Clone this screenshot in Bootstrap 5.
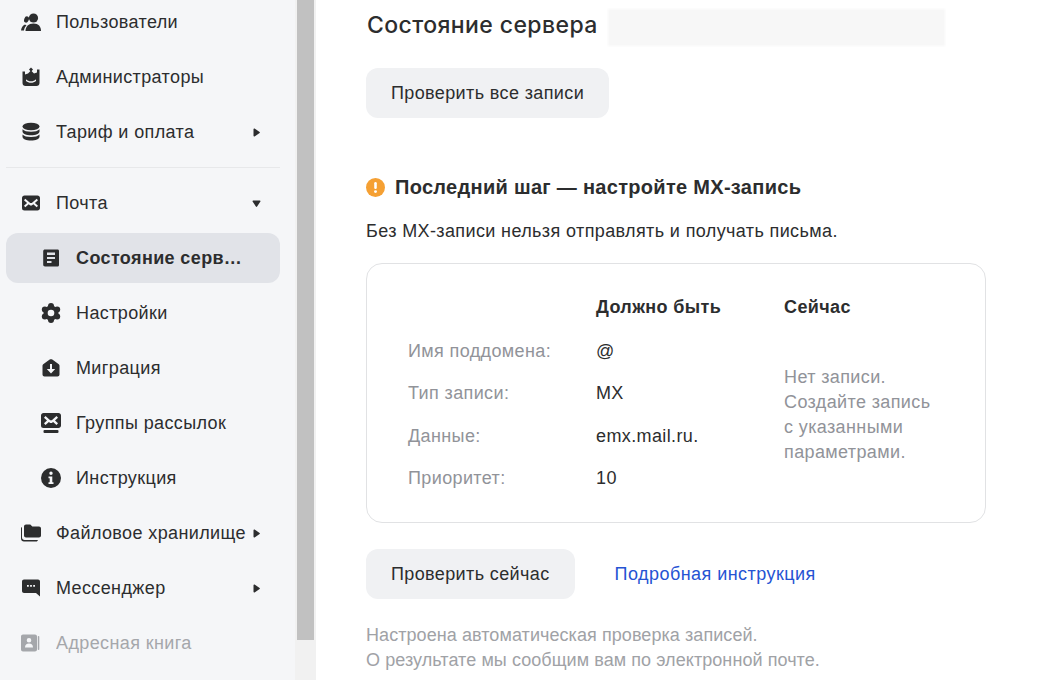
<!DOCTYPE html>
<html lang="ru">
<head>
  <meta charset="UTF-8"/>
  <meta name="viewport" content="width=device-width, initial-scale=1.0"/>
  <title>Состояние сервера</title>
  <link rel="stylesheet" href="https://cdn.jsdelivr.net/npm/bootstrap@5.3.0/dist/css/bootstrap.min.css"/>
  <style>
    html, body { height: 680px; overflow: hidden; }
    body { font-family: "Liberation Sans", Arial, sans-serif; font-size: 18px; line-height: 25px; letter-spacing: .38px; color: #2c2d2e; background: #fff; }
    .page-wrap { height: 680px; }
    .side-menu { width: 295px; height: 680px; background: #f5f6f8; padding: 0 15px 0 6px; margin: 0; flex: none; }
    .side-list { margin-top: -3px; gap: 5px; }
    .side-item { height: 50px; padding: 0 19px 0 15px; border-radius: 12px; color: #2c2d2e; text-decoration: none; white-space: nowrap; }
    .side-item.sub { padding-left: 35px; padding-right: 33px; }
    .side-item.active-item { background: #e1e3e8; font-weight: 700; }
    .side-item.off { color: #a5a7ab; }
    .side-icon { width: 20px; height: 20px; flex: none; margin-right: 15px; fill: currentColor; }
    .side-label { flex: 1 1 auto; min-width: 0; overflow: hidden; text-overflow: ellipsis; }
    .side-arrow { width: 9px; height: 9px; flex: none; margin-left: 5px; fill: currentColor; }
    .side-line { height: 1px; background: #e7e8ea; margin: 5px 0; }
    .scroll-track { width: 21px; height: 680px; flex: none; background: #f1f1f1; padding: 0 2px; }
    .scroll-thumb { height: 640px; background: #c1c1c1; }
    .main-area { padding: 0 0 0 50px; width: 670px; }
    .title-row { height: 68px; }
    .page-title { font-family: Inter, "Liberation Sans", sans-serif; font-size: 23px; line-height: 30px; font-weight: 500; letter-spacing: .4px; margin: 10px 0 0 1px; }
    .blur-patch { width: 337px; height: 37px; margin: 9px 0 0 10px; background: #f7f7f7; filter: blur(1px); }
    .grey-btn { background: #f0f1f3; color: #2c2d2e; border: 0; border-radius: 12px; height: 50px; padding: 0 25px; font-size: 18px; line-height: 25px; letter-spacing: .38px; }
    .warn-row { margin-top: 57px; }
    .warn-title { font-size: 20px; line-height: 25px; font-weight: 700; letter-spacing: .3px; margin: 0; }
    .warn-icon { width: 19px; height: 19px; margin-right: 10px; flex: none; }
    .mx-text { margin-top: 19px; }
    .record-box { width: 620px; height: 260px; border: 1px solid #e1e2e4; border-radius: 16px; padding: 31px 0 0 41px; margin-top: 19px; }
    .col-names { width: 188px; color: #919399; }
    .col-want { width: 188px; }
    .col-now { width: 170px; color: #919399; }
    .record-head { font-weight: 700; height: 25px; margin-bottom: 19px; }
    .col-now .record-head { color: #2c2d2e; }
    .record-row { height: 25px; margin-bottom: 17.3px; }
    .now-text { margin-top: 45px; }
    .check-row { margin-top: 26px; }
    .more-link { color: #2553d3; text-decoration: none; margin-left: 40px; letter-spacing: .45px; }
    .foot-note { color: #a0a2a6; margin: 24px 0 0; letter-spacing: .07px; }
  </style>
</head>
<body>
  <div class="page-wrap d-flex">
    <!-- sidebar -->
    <nav class="side-menu">
      <div class="side-list d-flex flex-column">
        <a class="side-item d-flex align-items-center" href="#">
          <svg class="side-icon" viewBox="0 0 20 20"><circle cx="12.500" cy="6" r="4.600"/><path d="M4.500 19c0-4.500 3-7.500 8-7.500s7.500 3 7.500 7.500z"/><ellipse cx="5.500" cy="7.500" rx="2.300" ry="3.300" transform="rotate(20 5.500 7.500)"/><path d="M0 18.500c.2-2.500 1.500-5 4-6l1.500 1c-1.500 1.200-2.300 3-2.500 5z"/></svg>
          <span class="side-label">Пользователи</span>
        </a>
        <a class="side-item d-flex align-items-center" href="#">
          <svg class="side-icon" viewBox="0 0 20 20"><path d="M10 .5l2 2.100-2 2.100-2-2.100z"/><path fill-rule="evenodd" d="M1.500 4.500H4v3l3-1 3-3 3 3 3-1v-3h2.500V16c0 1.700-1.300 3-3 3h-11c-1.700 0-3-1.300-3-3zM5 12.300c1.500 1.400 3 2 5 2s3.500-.6 5-2V14c-1.500 1.200-3 1.800-5 1.800S6.500 15.200 5 14z"/></svg>
          <span class="side-label">Администраторы</span>
        </a>
        <a class="side-item d-flex align-items-center" href="#">
          <svg class="side-icon" viewBox="0 0 20 20"><ellipse cx="10" cy="4.500" rx="8.500" ry="3.800"/><path d="M1.500 7.300C3 9 6 9.800 10 9.800s7-.8 8.500-2.500v2.200c0 2.200-3.800 3.800-8.500 3.800s-8.500-1.600-8.500-3.800z"/><path d="M1.500 12.600c1.500 1.700 4.500 2.500 8.500 2.500s7-.8 8.500-2.500v2.200c0 2.200-3.800 3.800-8.500 3.800s-8.500-1.600-8.500-3.800z"/></svg>
          <span class="side-label">Тариф и оплата</span>
          <svg class="side-arrow" viewBox="0 0 9 9"><path d="M1.500 1.200c0-.6.600-.9 1.100-.6l5 3.300c.4.300.4.900 0 1.200l-5 3.300c-.5.300-1.100 0-1.100-.6z"/></svg>
        </a>
        <div class="side-line"></div>
        <a class="side-item d-flex align-items-center" href="#">
          <svg class="side-icon" viewBox="0 0 20 20"><path fill-rule="evenodd" d="M3.500 2.500h13c1.400 0 2.500 1.100 2.500 2.500v10c0 1.400-1.100 2.500-2.500 2.500h-13A2.500 2.500 0 0 1 1 15V5c0-1.400 1.100-2.500 2.500-2.500zM4.300 5.800L3 7.300 6.100 10 3 12.700l1.300 1.500L7.700 11.200 9.200 12.500h1.600l1.500-1.300 3.400 3 1.300-1.500L13.900 10 17 7.300l-1.300-1.500L10.800 10H9.200z"/></svg>
          <span class="side-label">Почта</span>
          <svg class="side-arrow" viewBox="0 0 9 9"><path d="M1.200 1.500h6.600c.6 0 .9.600.6 1.100l-3.300 5c-.3.400-.9.400-1.200 0l-3.300-5c-.3-.5 0-1.100.6-1.100z"/></svg>
        </a>
        <a class="side-item sub active-item d-flex align-items-center" href="#">
          <svg class="side-icon" viewBox="0 0 20 20"><path fill-rule="evenodd" d="M4 1.500h12.500c1 0 1.500.6 1.500 1.500v14c0 .9-.5 1.500-1.500 1.500H4c-1 0-1.800-.7-1.800-1.700V3.200c0-1 .8-1.700 1.800-1.700zM6 4.500V7h8V4.500zM6 9v2h8V9zM6 13v2h4.500v-2z"/></svg>
          <span class="side-label">Состояние сервера</span>
        </a>
        <a class="side-item sub d-flex align-items-center" href="#">
          <svg class="side-icon" viewBox="0 0 20 20"><circle cx="10" cy="3" r="3"/><circle cx="16.200" cy="6.500" r="3"/><circle cx="16.200" cy="13.500" r="3"/><circle cx="10" cy="17" r="3"/><circle cx="3.800" cy="13.500" r="3"/><circle cx="3.800" cy="6.500" r="3"/><circle cx="10" cy="10" r="7.500"/><circle cx="10" cy="10" r="3.300" fill="#f5f6f8"/></svg>
          <span class="side-label">Настройки</span>
        </a>
        <a class="side-item sub d-flex align-items-center" href="#">
          <svg class="side-icon" viewBox="0 0 20 20"><path fill-rule="evenodd" d="M8.700 1.500c.8-.5 1.800-.5 2.600 0l6.500 4.700c.5.400.7.900.7 1.500v8.800c0 1.100-.9 2-2 2h-13c-1.100 0-2-.9-2-2V7.700c0-.6.200-1.100.7-1.500zM9 6v5H5.800l4.200 4.600 4.200-4.600H11V6z"/></svg>
          <span class="side-label">Миграция</span>
        </a>
        <a class="side-item sub d-flex align-items-center" href="#">
          <svg class="side-icon" viewBox="0 0 20 20"><path fill-rule="evenodd" d="M2.500 0h15C18.900 0 20 1.100 20 2.500v10c0 1.400-1.100 2.500-2.500 2.500h-15A2.500 2.500 0 0 1 0 12.500v-10C0 1.100 1.100 0 2.500 0zM4.500 3L3 4.700 6 7.500 3 10.300 4.500 12l3.400-3 1.300 1.100h1.600l1.300-1.100 3.400 3 1.500-1.700-3-2.800 3-2.800L15.500 3l-4.700 4.300H9.200z"/><rect x="2.500" y="17" width="15" height="3" rx="1"/></svg>
          <span class="side-label">Группы рассылок</span>
        </a>
        <a class="side-item sub d-flex align-items-center" href="#">
          <svg class="side-icon" viewBox="0 0 20 20"><path fill-rule="evenodd" d="M10 0a10 10 0 1 1 0 20 10 10 0 0 1 0-20zM10 3.500a1.700 1.700 0 1 0 0 3.400 1.700 1.700 0 0 0 0-3.400zM7.500 8.500v1.700h1.200v4H7.500V16h5v-1.800h-1.200V8.500z"/></svg>
          <span class="side-label">Инструкция</span>
        </a>
        <a class="side-item d-flex align-items-center" href="#">
          <svg class="side-icon" viewBox="0 0 20 20"><path d="M5 1.500h4.300l2 2H18c1.100 0 2 .9 2 2v7c0 1.100-.9 2-2 2H5c-1.100 0-2-.9-2-2v-9c0-1.100.9-2 2-2z"/><path d="M0 5.500c0-.8.400-1.300 1-1.500v10.500c0 1.400 1.100 2.500 2.500 2.500H17c-.2.800-.9 1.500-2 1.500H3c-1.700 0-3-1.300-3-3z"/></svg>
          <span class="side-label">Файловое хранилище</span>
          <svg class="side-arrow" viewBox="0 0 9 9"><path d="M1.500 1.200c0-.6.600-.9 1.100-.6l5 3.300c.4.300.4.900 0 1.200l-5 3.300c-.5.300-1.100 0-1.100-.6z"/></svg>
        </a>
        <a class="side-item d-flex align-items-center" href="#">
          <svg class="side-icon" viewBox="0 0 20 20"><path fill-rule="evenodd" d="M3 1.500h14c1.100 0 2 .9 2 2V18.500L15 15H3c-1.100 0-2-.9-2-2V3.500c0-1.100.9-2 2-2zM6 7v1.800h1.800V7zM9.100 7v1.800h1.800V7zM12.200 7v1.800H14V7z"/></svg>
          <span class="side-label">Мессенджер</span>
          <svg class="side-arrow" viewBox="0 0 9 9"><path d="M1.500 1.200c0-.6.600-.9 1.100-.6l5 3.300c.4.300.4.900 0 1.200l-5 3.300c-.5.300-1.100 0-1.100-.6z"/></svg>
        </a>
        <a class="side-item off d-flex align-items-center" href="#">
          <svg class="side-icon" viewBox="0 0 20 20"><path fill-rule="evenodd" d="M2 1.500h12c1.100 0 2 .9 2 2v13c0 1.100-.9 2-2 2H2c-1.100 0-2-.9-2-2v-13c0-1.100.9-2 2-2zM8 5a2.300 2.300 0 1 0 0 4.600A2.300 2.300 0 0 0 8 5zM4 14.500h8c0-2.500-1.500-4-4-4s-4 1.500-4 4z"/><rect x="16.800" y="3" width="1.500" height="14" rx=".7"/></svg>
          <span class="side-label">Адресная книга</span>
        </a>
      </div>
    </nav>
    <div class="scroll-track"><div class="scroll-thumb"></div></div>

    <!-- main content -->
    <main class="main-area">
      <div class="title-row d-flex align-items-start">
        <h1 class="page-title">Состояние сервера</h1>
        <div class="blur-patch"></div>
      </div>
      <button type="button" class="btn grey-btn">Проверить все записи</button>

      <div class="d-flex align-items-center warn-row">
        <svg class="warn-icon" viewBox="0 0 18 18"><circle cx="9" cy="9" r="9" fill="#f5a033"/><rect x="7.800" y="3.800" width="2.400" height="6.600" rx="1.200" fill="#fff"/><circle cx="9" cy="12.900" r="1.400" fill="#fff"/></svg>
        <h2 class="warn-title">Последний шаг — настройте MX-запись</h2>
      </div>
      <p class="mb-0 mx-text">Без MX-записи нельзя отправлять и получать письма.</p>

      <div class="record-box d-flex">
        <div class="col-names">
          <div class="record-head"></div>
          <div class="record-row">Имя поддомена:</div>
          <div class="record-row">Тип записи:</div>
          <div class="record-row">Данные:</div>
          <div class="record-row">Приоритет:</div>
        </div>
        <div class="col-want">
          <div class="record-head">Должно быть</div>
          <div class="record-row">@</div>
          <div class="record-row">MX</div>
          <div class="record-row">emx.mail.ru.</div>
          <div class="record-row">10</div>
        </div>
        <div class="col-now">
          <div class="record-head">Сейчас</div>
          <div class="now-text">Нет записи.<br>Создайте запись<br>с указанными<br>параметрами.</div>
        </div>
      </div>

      <div class="d-flex align-items-center check-row">
        <button type="button" class="btn grey-btn">Проверить сейчас</button>
        <a class="more-link" href="#">Подробная инструкция</a>
      </div>
      <p class="foot-note">Настроена автоматическая проверка записей.<br>О результате мы сообщим вам по электронной почте.</p>
    </main>
  </div>

  <script src="https://cdn.jsdelivr.net/npm/bootstrap@5.3.0/dist/js/bootstrap.bundle.min.js"></script>
</body>
</html>
